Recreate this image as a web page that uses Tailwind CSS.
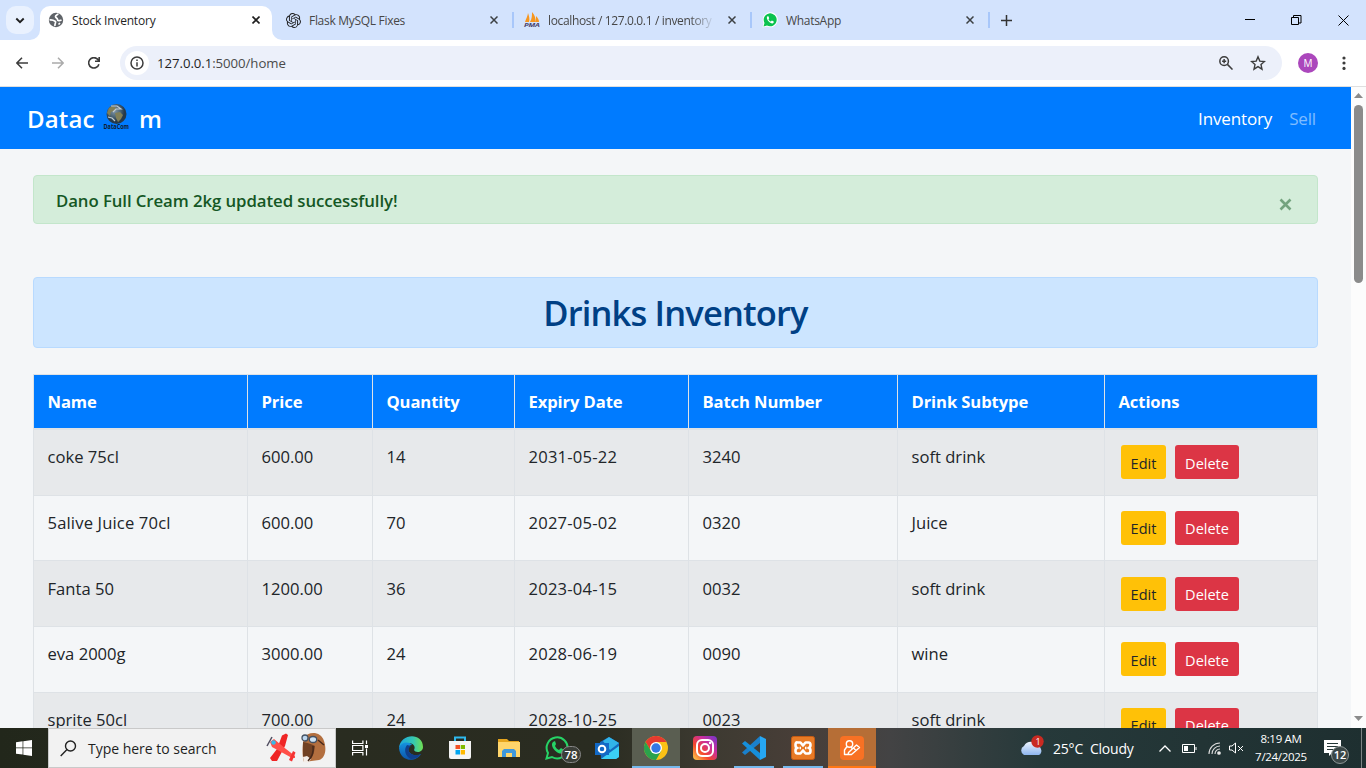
<!DOCTYPE html>
<html lang="en">
<head>
<meta charset="utf-8">
<title>Stock Inventory</title>
<script src="https://cdn.jsdelivr.net/npm/@tailwindcss/browser@4"></script>
</head>
<body class="w-[1366px] h-[768px] overflow-hidden flex flex-col bg-white font-['Open_Sans','Noto_Sans',sans-serif] text-[#212529]">

<!-- Tab strip -->
<div class="h-10 shrink-0 bg-[#d3e3fd] flex text-[12px] tracking-[-0.2px] text-[#474747]">
  <div class="w-10 pt-1.5 pl-1.5 relative">
    <div class="w-7 h-7 rounded-[10px] bg-[#e9f1fe] grid place-items-center">
      <svg width="10" height="7" viewBox="0 0 10 7" fill="none" stroke="#1f1f1f" stroke-width="1.9"><path d="M1.3 1.5 5 5.1 8.7 1.5"/></svg>
    </div>
    <svg class="absolute left-[30px] top-[30px]" width="10" height="10"><path d="M10 0V10H0A10 10 0 0 0 10 0" fill="#fff"/></svg>
  </div>
  <div class="relative w-[232px] mt-1.5 h-[34px] rounded-t-[10px] bg-white flex items-center pb-1.5 pl-2 text-[#1f1f1f]">
    <svg class="mr-2" width="16" height="16" viewBox="0 0 16 16"><circle cx="8" cy="8" r="7.2" fill="#5f6368"/><path d="M1.500 8C4 7.500 6 8.500 7.500 9.500c.5 1.500-1 2-.5 4.500M10 1.500C10 3 7.500 3 7.500 4.500S9.500 6 9.500 7.500s2 1.500 4 .5M10.500 12.500l1.500-1.500" fill="none" stroke="#fff" stroke-width="1.700"/></svg>
    <span class="w-[180px] pt-px">Stock Inventory</span>
    <svg width="8" height="8" viewBox="0 0 8 8" stroke="#1f1f1f" stroke-width="1.6"><path d="M.5.5l7 7m0-7-7 7"/></svg>
    <svg class="absolute -right-[10px] bottom-0" width="10" height="10"><path d="M0 0V10H10A10 10 0 0 1 0 0" fill="#fff"/></svg>
  </div>
  <div class="w-[242px] flex items-center pl-[14px]">
    <svg class="mr-2" width="15" height="15" viewBox="0 0 24 24" fill="#202123"><path d="M22.282 9.821a5.985 5.985 0 0 0-.516-4.910 6.046 6.046 0 0 0-6.510-2.900A6.065 6.065 0 0 0 4.981 4.182a5.985 5.985 0 0 0-3.998 2.900 6.046 6.046 0 0 0 .743 7.097 5.980 5.980 0 0 0 .510 4.911 6.051 6.051 0 0 0 6.515 2.900A5.985 5.985 0 0 0 13.260 24a6.056 6.056 0 0 0 5.772-4.206 5.990 5.990 0 0 0 3.997-2.900 6.056 6.056 0 0 0-.747-7.073zM13.260 22.430a4.476 4.476 0 0 1-2.876-1.040l.141-.081 4.779-2.758a.795.795 0 0 0 .392-.681v-6.737l2.020 1.168a.071.071 0 0 1 .038.052v5.583a4.504 4.504 0 0 1-4.494 4.494zM3.600 18.304a4.470 4.470 0 0 1-.535-3.014l.142.085 4.783 2.759a.771.771 0 0 0 .780 0l5.843-3.369v2.332a.080.080 0 0 1-.033.062L9.740 19.950a4.500 4.500 0 0 1-6.140-1.646zM2.340 7.896a4.485 4.485 0 0 1 2.366-1.973V11.600a.766.766 0 0 0 .388.677l5.815 3.355-2.020 1.168a.076.076 0 0 1-.071 0l-4.830-2.786A4.504 4.504 0 0 1 2.340 7.872zm16.597 3.855l-5.833-3.387L15.119 7.200a.076.076 0 0 1 .071 0l4.830 2.791a4.494 4.494 0 0 1-.676 8.105v-5.678a.790.790 0 0 0-.407-.667zm2.010-3.023l-.141-.085-4.774-2.782a.776.776 0 0 0-.785 0L9.409 9.230V6.897a.066.066 0 0 1 .028-.061l4.830-2.787a4.500 4.500 0 0 1 6.680 4.660zm-12.640 4.135l-2.020-1.164a.080.080 0 0 1-.038-.057V6.075a4.500 4.500 0 0 1 7.375-3.453l-.142.080L8.704 5.460a.795.795 0 0 0-.393.681zm1.097-2.365l2.602-1.500 2.607 1.500v2.999l-2.597 1.500-2.607-1.500z"/></svg>
    <span class="w-[181px] pt-px tracking-[-0.3px]">Flask MySQL Fixes</span>
    <svg width="8" height="8" viewBox="0 0 8 8" stroke="#3c4043" stroke-width="1.5"><path d="M.5.5l7 7m0-7-7 7"/></svg>
  </div>
  <div class="w-[238px] flex items-center -ml-0.5">
    <div class="w-0.5 h-4 bg-[#a8c7fa] mr-[10px]"></div>
    <svg class="mr-2 overflow-visible" width="16" height="16" viewBox="0 0 16 16"><path d="M1 10C2 7 4 3 4 1c1 3 2 6 1 9zM6 10C8 7 8 3 8 0c3 3 4 7 3 10zM11 10c1-2 1-4 1-6 2 2 3 4 3 6z" fill="#f6961f"/><text x="0" y="15" font-size="6" font-weight="bold" font-style="italic" fill="#49436e" textLength="15.500" lengthAdjust="spacingAndGlyphs">PMA</text></svg>
    <span class="w-[167px] mr-[13px] pt-px overflow-hidden whitespace-nowrap tracking-[-0.35px] [mask-image:linear-gradient(to_right,#000_85%,transparent)]">localhost / 127.0.0.1 / inventory</span>
    <svg width="8" height="8" viewBox="0 0 8 8" stroke="#3c4043" stroke-width="1.5"><path d="M.5.5l7 7m0-7-7 7"/></svg>
  </div>
  <div class="w-[238px] flex items-center">
    <div class="w-0.5 h-4 bg-[#a8c7fa] mr-[10px]"></div>
    <svg class="mr-2" width="16" height="16" viewBox="0 0 16 16"><path d="M.5 15.500 1.500 11A7.500 7.500 0 1 1 5 14.500z" fill="#fff"/><path d="M1.500 14.500 2.500 11A6.500 6.500 0 1 1 5 13.500z" fill="#0ac24e"/><path d="M5.500 4.300c-2 1.500 1 6.700 4.700 7.200 1.200-.2 1.800-1 1.500-2l-1.800-.9-1 1c-1-.4-2-1.400-2.400-2.400l.7-1-.8-1.900z" fill="#fff"/></svg>
    <span class="w-[180px] pt-px tracking-[-0.3px]">WhatsApp</span>
    <svg width="8" height="8" viewBox="0 0 8 8" stroke="#3c4043" stroke-width="1.500"><path d="M.5.5l7 7m0-7-7 7"/></svg>
  </div>
  <div class="flex items-center">
    <div class="w-0.5 h-4 bg-[#a8c7fa] mr-[11px]"></div>
    <svg width="11" height="11" viewBox="0 0 11 11" stroke="#333" stroke-width="1.500"><path d="M5.500 0v11M0 5.500h11"/></svg>
  </div>
  <div class="ml-auto flex items-center gap-9 pr-[17px]">
    <svg width="10" height="10" stroke="#000"><path d="M0 4.500h10"/></svg>
    <svg width="11" height="11" fill="none" stroke="#000"><path d="M.5 2.500h7v7h-7zM2.500 2.500v-2h7.500v7.500h-2.500"/></svg>
    <svg width="11" height="11" stroke="#000"><path d="M.5.5l10 10m0-10-10 10"/></svg>
  </div>
</div>

<!-- Address bar -->
<div class="h-[47px] shrink-0 border-b border-[#dfdfdf] bg-white flex items-center">
  <svg class="ml-4" width="12" height="12" viewBox="0 0 12 12" fill="none" stroke="#3c3c3c" stroke-width="1.500"><path d="M12 6H1M6 .7.9 6 6 11.300"/></svg>
  <svg class="ml-6" width="12" height="12" viewBox="0 0 12 12" fill="none" stroke="#ababab" stroke-width="1.500"><path d="M0 6h11M6 .7 11.100 6 6 11.300"/></svg>
  <svg class="ml-6" width="12" height="12" viewBox="0 0 12 12" fill="none" stroke="#3c3c3c" stroke-width="1.600"><path d="M10.900 7.200A5.200 5.200 0 1 1 9.800 2.400L11 3.700M11.200 0v4.200H7"/></svg>
  <div class="ml-5 w-[1162px] h-[34px] rounded-full bg-[#ecf0fa] flex items-center pl-[5px]">
    <div class="w-6 h-6 rounded-full bg-white grid place-items-center">
      <svg width="14" height="14" viewBox="0 0 14 14" fill="none" stroke="#3c3c3c" stroke-width="1.500"><circle cx="7" cy="7" r="6"/><path d="M7 6.200V10.500M7 3.500V5"/></svg>
    </div>
    <div class="ml-2 pt-px text-[13.200px] tracking-[-0.05px] text-[#4a4a4a]"><span class="text-[#1f1f1f]">127.0.0.1</span>:5000/home</div>
    <svg class="ml-auto" width="14" height="14" viewBox="0 0 15 15" fill="none" stroke="#3c3c3c" stroke-width="1.600"><circle cx="5.500" cy="5.500" r="4.600"/><path d="M9 9l5.500 5.500M5.500 3.300v4.400M3.300 5.500h4.400"/></svg>
    <svg class="ml-[17px] mr-4" width="16" height="16" viewBox="0 0 16 16" fill="none" stroke="#3c3c3c" stroke-width="1.400"><path d="m8 1.800 1.800 4.300 4.700.4-3.500 3.100 1 4.600L8 11.700 4 14.200l1-4.600L1.500 6.500l4.700-.4z"/></svg>
  </div>
  <div class="ml-4 w-5 h-5 rounded-full bg-[#ab47bc] text-white text-[10px] grid place-items-center">M</div>
  <svg class="ml-6" width="4" height="14" fill="#3c3c3c"><circle cx="2" cy="2" r="1.600"/><circle cx="2" cy="7" r="1.600"/><circle cx="2" cy="12.400" r="1.600"/></svg>
</div>

<!-- Page -->
<div class="h-[641px] shrink-0 flex overflow-hidden">
  <div class="w-[1351px] bg-[#f4f6f8] overflow-hidden text-[16.600px]">
    <nav class="h-[62px] bg-[#007bff] text-white flex items-center pl-[27px] pr-[35px]">
      <div class="flex items-center text-[24px] font-semibold leading-8 tracking-[0.15px]">
        <span class="w-[75px] pt-0.5">Datac</span>
        <svg class="mb-1 overflow-visible" width="27" height="27" viewBox="0 0 27 27">
          <defs><radialGradient id="globe" cx=".4" cy=".35"><stop offset="0" stop-color="#8197ab"/><stop offset=".6" stop-color="#4b6373"/><stop offset="1" stop-color="#26394a"/></radialGradient></defs>
          <circle cx="14.500" cy="11" r="10" fill="url(#globe)"/>
          <path d="M7 5l4-2 3 2-2 3-3 1-1 4-3-3zM13 10l5-1 3 3-2 4-3 3-2-4z" fill="#817f58"/><path d="M9 3l6 0 4 3-5 0-3 3M6 14l4 1 3 3" stroke="#c1cbd1" fill="none" stroke-width="1.200"/>
          <text x="1.500" y="25.500" font-size="6.300" letter-spacing="0" font-weight="bold" fill="#101c30" textLength="25.500" lengthAdjust="spacingAndGlyphs">DataCom</text>
        </svg>
        <span class="ml-[10px] pt-0.5">m</span>
      </div>
      <div class="ml-auto flex gap-[17px] pt-0.5 tracking-[-0.15px] text-[17px]"><span>Inventory</span><span class="text-white/50">Sell</span></div>
    </nav>
    <div class="mx-[33px] mt-[26px] h-[49px] rounded border border-[#c3e6cb] bg-[#d4edda] text-[#155724] flex items-center justify-between pl-[22px] pr-[25px]">
      <span class="font-semibold text-[16.800px] pt-0.5 tracking-[-0.08px]">Dano Full Cream 2kg updated successfully!</span>
      <svg class="mt-[9px]" width="13" height="13" viewBox="0 0 13 13" stroke="#73a37e" stroke-width="2.600"><path d="M1.500 1.500l10 10m0-10-10 10"/></svg>
    </div>
    <div class="mx-[33px] mt-[53px] h-[71px] rounded border border-[#b8daff] bg-[#cce5ff] text-[#004085] grid place-items-center"><h1 class="pt-0.5 text-[34.500px] leading-none font-semibold tracking-[-0.850px]">Drinks Inventory</h1></div>

    <div class="ml-[33px] mt-[26px] w-[1285px] border-l border-t border-[#dee2e6] *:grid *:grid-cols-[214px_125px_142px_174px_209px_207px_213px] [&>*>*]:border-r [&>*>*]:border-[#dee2e6] [&>*>*]:pl-[13.500px]">
      <div class="h-[55px] bg-[#007bff] text-white font-bold border-b-2 border-[#dee2e6] leading-[53px] tracking-[-0.1px]">
        <div>Name</div><div>Price</div><div>Quantity</div><div>Expiry Date</div><div>Batch Number</div><div>Drink Subtype</div><div>Actions</div>
      </div>
      <div class="h-[66px] border-b border-[#dee2e6] bg-[#e7e9eb] leading-[54px]">
        <div>coke 75cl</div><div>600.00</div><div>14</div><div class="tracking-[0.2px]">2031-05-22</div><div>3240</div><div>soft drink</div>
        <div class="flex gap-[9px] pt-[15px] pl-4! text-[14.500px] leading-[37px]"><span class="w-[45px] h-[34px] rounded-[3px] bg-[#ffc107] text-center">Edit</span><span class="w-16 h-[34px] rounded-[3px] bg-[#dc3545] text-white text-center">Delete</span></div>
      </div>
      <div class="h-[65px] border-b border-[#dee2e6] leading-[54px]">
        <div class="tracking-[0.15px]">5alive Juice 70cl</div><div>600.00</div><div>70</div><div class="tracking-[0.2px]">2027-05-02</div><div>0320</div><div>Juice</div>
        <div class="flex gap-[9px] pt-[15px] pl-4! text-[14.500px] leading-[36px]"><span class="w-[45px] h-[34px] rounded-[3px] bg-[#ffc107] text-center">Edit</span><span class="w-16 h-[34px] rounded-[3px] bg-[#dc3545] text-white text-center">Delete</span></div>
      </div>
      <div class="h-[66px] border-b border-[#dee2e6] bg-[#e7e9eb] leading-[55px]">
        <div>Fanta 50</div><div>1200.00</div><div>36</div><div class="tracking-[0.2px]">2023-04-15</div><div>0032</div><div>soft drink</div>
        <div class="flex gap-[9px] pt-4 pl-4! text-[14.500px] leading-[36px]"><span class="w-[45px] h-[34px] rounded-[3px] bg-[#ffc107] text-center">Edit</span><span class="w-16 h-[34px] rounded-[3px] bg-[#dc3545] text-white text-center">Delete</span></div>
      </div>
      <div class="h-[66px] border-b border-[#dee2e6] leading-[54px]">
        <div>eva 2000g</div><div>3000.00</div><div>24</div><div class="tracking-[0.2px]">2028-06-19</div><div>0090</div><div>wine</div>
        <div class="flex gap-[9px] pt-[15px] pl-4! text-[14.500px] leading-[37px]"><span class="w-[45px] h-[34px] rounded-[3px] bg-[#ffc107] text-center">Edit</span><span class="w-16 h-[34px] rounded-[3px] bg-[#dc3545] text-white text-center">Delete</span></div>
      </div>
      <div class="h-[66px] border-b border-[#dee2e6] bg-[#e7e9eb] leading-[54px]">
        <div>sprite 50cl</div><div>700.00</div><div>24</div><div class="tracking-[0.2px]">2028-10-25</div><div>0023</div><div>soft drink</div>
        <div class="flex gap-[9px] pt-[15px] pl-4! text-[14.500px] leading-[36px]"><span class="w-[45px] h-[34px] rounded-[3px] bg-[#ffc107] text-center">Edit</span><span class="w-16 h-[34px] rounded-[3px] bg-[#dc3545] text-white text-center">Delete</span></div>
      </div>
    </div>
  </div>
  <div class="w-[15px] bg-[#fcfcfc] flex flex-col items-center justify-between pt-1.5 pb-[7px]">
    <div class="flex flex-col items-center gap-[7px]">
      <svg width="9" height="5" fill="#8b8b8b"><path d="M0 5 4.500 0 9 5z"/></svg>
      <div class="w-[9px] h-[178px] rounded-full bg-[#8b8b8b]"></div>
    </div>
    <svg width="9" height="5" fill="#8b8b8b"><path d="M0 0 4.500 5 9 0z"/></svg>
  </div>
</div>

<!-- Taskbar -->
<div class="h-10 shrink-0 flex text-white bg-[linear-gradient(to_right,#22271b_0,#292c20_330px,#2a2c21_600px,#3d3a31_710px,#483e38_800px,#434344_890px,#26393a_1040px,#1e2f30_1366px)]">
  <div class="w-12 grid place-items-center"><svg width="16" height="16" viewBox="0 0 16 16" fill="#fff"><path d="M0 2.300 6.600 1.300v6.300H0zM7.300 1.200 16 0v7.600H7.300zM0 8.300h6.600v6.300L0 13.700zM7.300 8.300H16V16L7.300 14.700z"/></svg></div>
  <div class="w-72 bg-[#f2f2f2] border border-[#c9c9c9] flex items-center pl-[11px] pr-2 text-[14px] tracking-[-0.02px] text-[#1f1f1f]">
    <svg width="17" height="17" viewBox="0 0 17 17" fill="none" stroke="#222" stroke-width="1.400"><circle cx="10.500" cy="6" r="5"/><path d="M7 9.500.7 16"/></svg>
    <span class="ml-[11px]">Type here to search</span>
    <svg class="ml-auto" width="30" height="32" viewBox="0 0 30 32"><path d="M16 3.500 20 1.500 22 3 19 14 11 29 6 29 4 26 11 17z" fill="#ef2525"/><path d="M4 10 8 7 20 17 29 24 29 26 26 26 17 21 6 15z" fill="#ff4f48"/><path d="M23 28l4-9 2.500 1.500L26 29.500z" fill="#f53333"/><path d="M1 14 6 5" stroke="#504d60" stroke-width="1.500"/><circle cx="7.500" cy="10.500" r="2.300" fill="#38b9e7"/></svg>
    <svg class="ml-1" width="27" height="32" viewBox="0 0 27 32"><path d="M4 6C8-1 21-1 24 9c3 9 1 17-5 19L4 30c-2-6-2-17 0-24z" fill="#b36f3f"/><path d="M3 10c5 1 9 2 12 4-1 7-2 13-8 15L3 24z" fill="#714123"/><path d="M3 25l4-1 4 3-3 4-4-1z" fill="#f4ede8"/><path d="M13 14c1 7-2 12-5 15M18 8l6 5" fill="none" stroke="#47291b" stroke-width="1.500"/><ellipse cx="5" cy="6" rx="3" ry="3" fill="#bcd6ee" stroke="#455263" stroke-width="1.300"/><ellipse cx="13" cy="7.500" rx="3.700" ry="3" fill="#cfe3f4" stroke="#455263" stroke-width="1.300"/></svg>
  </div>
  <div class="w-12 grid place-items-center"><svg width="16" height="16" viewBox="0 0 16 16" fill="none" stroke="#fff" stroke-width="1.200"><path d="M.6.5v3h10.300v-3M.6 15.500v-3h10.300v3M.6 5.500h10.300v5H.6zM14.500.5v3.500M14.500 8.500v7"/><path d="M13 5h3v3h-3z" fill="#fff" stroke="none"/></svg></div>
  <div class="w-[49px] ml-0.5 grid place-items-center"><svg width="24" height="24" viewBox="0 0 24 24">
    <defs><linearGradient id="e1" x1="0" x2="1"><stop stop-color="#1ba5e0"/><stop offset=".6" stop-color="#35c8b2"/><stop offset="1" stop-color="#70df51"/></linearGradient><linearGradient id="e2" x1="0" y1="0" x2="0" y2="1"><stop stop-color="#1593df"/><stop offset="1" stop-color="#0d54a9"/></linearGradient></defs>
    <path d="M0 12C1-3 24-4 24 11c0 6-8 6-9 3 2-4-1-7-6-7-4 0-7 2-9 5z" fill="url(#e1)"/><path d="M0 12c2-6 10-7 13-3-4 0-5 5-2 8 3 3 8 3 11 1-5 9-21 8-22-6z" fill="url(#e2)"/><path d="M8 9c-4 5-1 12 4 14 4 0 8-2 10-5-4 2-9 1-11-1-2-2-2-5 1-7z" fill="#103f8c"/></svg></div>
  <div class="w-[49px] grid place-items-center"><svg width="24" height="24" viewBox="0 0 24 24"><path d="M7 6V1.500h10V6" fill="none" stroke="#2eb9ee" stroke-width="2"/><path d="M1 5h22v16a2 2 0 0 1-2 2H3a2 2 0 0 1-2-2z" fill="#f4f4f4"/><path d="M7.500 9H12v4H7.500z" fill="#f25022"/><path d="M12.700 9H17v4h-4.300z" fill="#7fba00"/><path d="M7.500 14H12v4.500H7.500z" fill="#00a4ef"/><path d="M12.700 14H17v4.500h-4.300z" fill="#ffb900"/></svg></div>
  <div class="w-[49px] grid place-items-center"><svg width="22" height="20" viewBox="0 0 22 20"><path d="M0 1h9l2 2h10v16H0z" fill="#e6a51e"/><path d="M0 4h22v15H0z" fill="#ffd56b"/><path d="M4 19v-6l2-2h10l2 2v6h-4v-4H8v4z" fill="#3f98dc"/></svg></div>
  <div class="w-[49px] grid place-items-center relative"><svg class="mr-0.5" width="24" height="24" viewBox="0 0 24 24"><path d="M1.500 22.500 3 17A10.500 10.500 0 1 1 7 21z" fill="none" stroke="#26d366" stroke-width="2"/><path d="M8 6c-4 4 5 14 10 11l1-3-3-2-2 2c-2-1-3-2-4-4l1-2-1-3z" fill="#26d366"/></svg>
    <div class="absolute left-7 top-[18px] w-5 h-[17px] rounded-full bg-[#3b3e38] border border-[#888] text-[11.500px] font-semibold leading-[15px] text-center">78</div></div>
  <div class="w-[49px] grid place-items-center"><svg width="24" height="22" viewBox="0 0 24 22"><path d="M5 5 14 0l10 6v14l-3 2H6z" fill="#1469bd"/><path d="M14 0l10 6-9 7-7-9z" fill="#31b4e9"/><path d="M6 22 24 9v11l-3 2z" fill="#3bcff5"/><path d="M0 6h14v12H0z" fill="#1269c6"/><circle cx="7" cy="12" r="3.300" fill="none" stroke="#fff" stroke-width="2"/></svg></div>
  <div class="w-12 ml-px grid place-items-center bg-[#5a5e51] border-b-2 border-[#76b9ed]"><svg class="mt-0.5" width="24" height="24" viewBox="0 0 24 24"><circle cx="12" cy="12" r="12" fill="#fbc116"/><path d="M1.600 6A12 12 0 0 1 22.400 6H12L7 15z" fill="#e53a30"/><path d="M1.600 6A12 12 0 0 0 12 24l5.200-9L12 17l-5-2z" fill="#2ba24c"/><circle cx="12" cy="12" r="6" fill="#fff"/><circle cx="12" cy="12" r="4.700" fill="#3478e5"/></svg></div>
  <div class="w-[50px] grid place-items-center"><svg width="24" height="24" viewBox="0 0 24 24"><defs><linearGradient id="ig" x1="0" y1="1" x2="1" y2="0"><stop stop-color="#ffd34c"/><stop offset=".35" stop-color="#f4462c"/><stop offset=".65" stop-color="#ca2e9e"/><stop offset="1" stop-color="#7036cc"/></linearGradient></defs><rect width="24" height="24" rx="4" fill="url(#ig)"/><g fill="none" stroke="#fff" stroke-width="2"><rect x="4" y="4" width="16" height="16" rx="5"/><circle cx="12" cy="12" r="4"/></g><circle cx="17" cy="7" r="1.200" fill="#fff"/></svg></div>
  <div class="w-10 ml-1 mr-[9px] grid place-items-center border-b-2 border-[#76b9ed]"><svg class="mt-0.5" width="24" height="24" viewBox="0 0 24 24"><path d="M18 0 24 3v18l-6 3z" fill="#26a7f3"/><path d="M18 0v7L3 19 0 16.500z" fill="#1a80cc"/><path d="M18 24v-7L3 5 0 7.500z" fill="#168fdb"/></svg></div>
  <div class="w-10 mr-[5px] grid place-items-center border-b-2 border-[#76b9ed]"><svg class="mt-0.5" width="24" height="24" viewBox="0 0 24 24"><rect x=".5" y=".5" width="23" height="23" rx="2" fill="#e87a25" stroke="#c55b14"/><path d="M6.500 6.500H9.500L12 9.500 14.500 6.500H17.500Q19.500 6.500 19.500 9T17.500 12Q19.500 12 19.500 14.700T17.500 17.500H14.500L12 14.500 9.500 17.500H6.500Q4.500 17.500 4.500 14.700T6.500 12Q4.500 12 4.500 9T6.500 6.500zM8.500 12H10M14 12h1.500" fill="none" stroke="#fff" stroke-width="2.600" stroke-linejoin="round"/></svg></div>
  <div class="w-12 grid place-items-center bg-[#b66e36] border-b-2 border-[#ff7614]"><svg class="mt-0.5" width="24" height="24" viewBox="0 0 24 24"><rect width="24" height="24" rx="4" fill="#f87124"/><g fill="none" stroke="#fff" stroke-width="1.400" stroke-linejoin="round"><circle cx="9.500" cy="8" r="3.200"/><path d="M7 10.500 4.500 14v4.500h7l8-7-3-2.500-8 7.500-.5 2.300M13 11.500l3 3M11 11l1.500 2"/></g></svg></div>
  <div class="ml-auto flex items-center">
    <svg width="26" height="24" viewBox="0 0 26 24" class="mb-0.5"><defs><linearGradient id="cl" x1="0" y1="0" x2="0" y2="1"><stop stop-color="#edf4fe"/><stop offset="1" stop-color="#8db5ee"/></linearGradient></defs><path d="M5 20a5 5 0 0 1 0-9 8 8 0 0 1 14 0 5 5 0 0 1 1 9z" fill="url(#cl)"/><circle cx="18.500" cy="6.500" r="6.200" fill="#c92a21"/><text x="16.500" y="10" font-size="9" fill="#fff">1</text></svg>
    <span class="ml-2 text-[14px] w-[92px] whitespace-pre tracking-[-0.2px]">25°C  Cloudy</span>
    <svg class="ml-[14px]" width="12" height="7" fill="none" stroke="#fff" stroke-width="1.300"><path d="M.5 6.500 6 1l5.500 5.500"/></svg>
    <svg class="ml-[11px]" width="15" height="9" fill="none" stroke="#fff"><path d="M.5.500h12v8H.5zM14 3v3"/><path d="M2 2h4v5H2z" fill="#fff" stroke="none"/></svg>
    <svg class="ml-[11px]" width="13" height="13" viewBox="0 0 13 13" fill="none" stroke="#ddd" stroke-width="1.100"><path d="M1 12A11 11 0 0 1 12 1M4 12A8 8 0 0 1 12 4M7 12a5 5 0 0 1 5-5" /><circle cx="11" cy="11" r="1.300" fill="#fff"/></svg>
    <svg class="ml-2" width="15" height="12" fill="none" stroke="#fff"><path d="M.5 4v4H3l3.500 3V1L3 4zM9 4l5 5m0-5-5 5"/></svg>
    <div class="w-[74px] text-center text-[11.500px] leading-[18px] tracking-[-0.3px]">8:19 AM<br>7/24/2025</div>
    <div class="w-[43px] h-10 relative pl-1.5 pt-3"><svg width="17" height="16" viewBox="0 0 17 16"><path d="M0 0h17v13h-9l-3 3v-3H0z" fill="#fff"/><path d="M3 3.500h11M3 6.500h11M3 9.500h7" stroke="#263838"/></svg>
      <div class="absolute left-[13px] top-[18px] size-[18px] rounded-full bg-[#3b4747] border border-[#8d9696] text-[11px] font-semibold leading-4 text-center">12</div></div>
    <div class="w-px h-10 bg-[#7b8585] mr-1"></div>
  </div>
</div>
</body>
</html>
